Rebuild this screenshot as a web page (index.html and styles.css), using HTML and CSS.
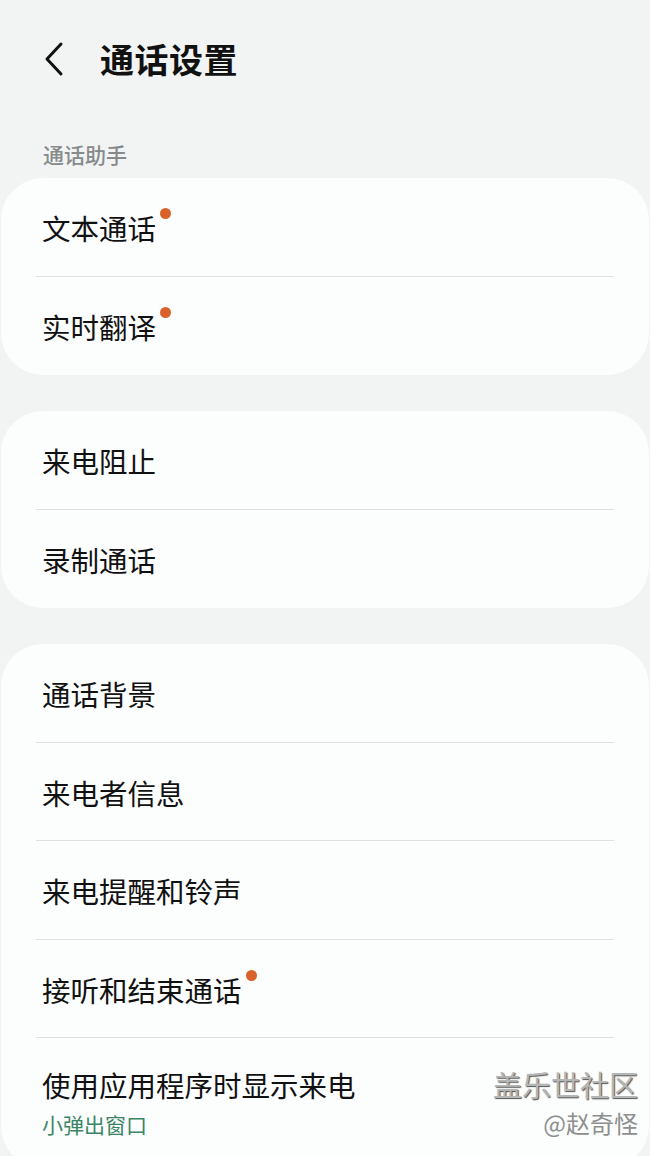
FILE: index.html
```html
<!DOCTYPE html>
<html lang="zh-CN">
<head>
<meta charset="utf-8">
<link rel="stylesheet" href="styles.css">
</head>
<body>
<div class="page">
  <header class="topbar">
    <svg class="back" width="24" height="36" viewBox="0 0 24 36"><path d="M19 3 L5 18 L19 33" fill="none" stroke="#111" stroke-width="3" stroke-linecap="round" stroke-linejoin="round"/></svg>
    <h1 class="title">通话设置</h1>
  </header>
  <div class="section-label">通话助手</div>
  <div class="card">
    <div class="row"><span class="label">文本通话<i class="dot"></i></span></div>
    <div class="row"><span class="label">实时翻译<i class="dot"></i></span></div>
  </div>
  <div class="card">
    <div class="row"><span class="label">来电阻止</span></div>
    <div class="row"><span class="label">录制通话</span></div>
  </div>
  <div class="card last">
    <div class="row"><span class="label">通话背景</span></div>
    <div class="row"><span class="label">来电者信息</span></div>
    <div class="row"><span class="label">来电提醒和铃声</span></div>
    <div class="row"><span class="label">接听和结束通话<i class="dot"></i></span></div>
    <div class="row two"><span class="label">使用应用程序时显示来电</span><span class="sub">小弹出窗口</span></div>
  </div>
  <div class="watermark">
    <div class="wm1">盖乐世社区</div>
    <div class="wm2">@赵奇怪</div>
  </div>
</div>
</body>
</html>
```
FILE: styles.css
```css
* { box-sizing: border-box; margin: 0; padding: 0; }
html, body { width: 650px; height: 1156px; overflow: hidden; }
body {
  background: #f2f4f4;
  font-family: "Noto Sans CJK SC", "Noto Sans", sans-serif;
  color: #111;
}
.page { position: relative; height: 1156px; }
.topbar {
  display: flex;
  align-items: center;
  height: 118px;
  padding-left: 42px;
}
.back { margin-right: 34px; }
.title {
  font-size: 34px;
  font-weight: 700;
  line-height: 1;
  letter-spacing: 0.5px;
}
.section-label {
  font-size: 21px;
  color: #868a8a;
  font-weight: 500;
  padding-left: 43px;
  height: 60px;
  line-height: 72px;
}
.card {
  background: #fcfdfd;
  border-radius: 42px;
  margin: 0 1px 36px;
  padding: 0 35px;
}
.row {
  position: relative;
  height: 98.5px;
  display: flex;
  flex-direction: column;
  justify-content: center;
  padding-left: 6px;
  padding-top: 3px;
  border-bottom: 1.5px solid #dde1e1;
}
.row:last-child { border-bottom: none; }
.label {
  position: relative;
  font-size: 28.5px;
  line-height: 1.2;
  align-self: flex-start;
}
.dot {
  position: absolute;
  right: -15px;
  top: -3px;
  width: 11px;
  height: 11px;
  border-radius: 50%;
  background: #d9622b;
}
.row.two { height: 130px; justify-content: flex-start; padding-top: 30px; }
.sub {
  font-size: 21px;
  color: #3b8565;
  line-height: 1.2;
  margin-top: 10px;
}
.watermark {
  position: absolute;
  right: 12px;
  top: 1064px;
  text-align: right;
  color: #a6a8a8;
}
.wm1 {
  font-size: 29px;
  line-height: 40px;
  color: #b4b6b6;
  text-shadow: 1px 1px 1px #555;
}
.wm2 {
  font-size: 24px;
  line-height: 38px;
  color: #8d8f8f;
}
```
